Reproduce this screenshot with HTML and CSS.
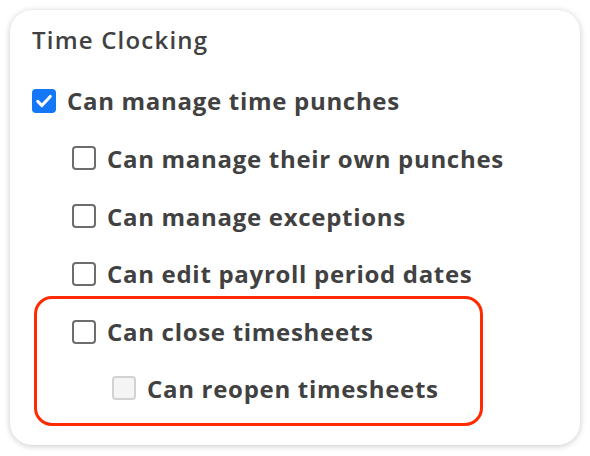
FILE: index.html
```html
<!DOCTYPE html>
<html lang="en">
<head>
<meta charset="UTF-8">
<title>Time Clocking</title>
<link rel="stylesheet" href="styles.css">
</head>
<body>

<div class="card">
  <h2 class="card-title">Time Clocking</h2>

  <label class="perm">
    <span class="box checked">
      <svg viewBox="0 0 24 24" width="20" height="20"><path d="M4.5 12.5l5 5L19.5 6.5" fill="none" stroke="#fff" stroke-width="3.6" stroke-linecap="round" stroke-linejoin="round"/></svg>
    </span>
    Can manage time punches
  </label>

  <label class="perm sub">
    <span class="box"></span>
    Can manage their own punches
  </label>

  <label class="perm sub">
    <span class="box"></span>
    Can manage exceptions
  </label>

  <label class="perm sub">
    <span class="box"></span>
    Can edit payroll period dates
  </label>

  <!-- highlighted group -->
  <div class="highlight">
    <label class="perm">
      <span class="box"></span>
      Can close timesheets
    </label>
    <label class="perm sub disabled">
      <span class="box"></span>
      Can reopen timesheets
    </label>
  </div>
</div>

</body>
</html>
```

FILE: styles.css
```css
body {
  margin: 0;
  padding: 10px;
  background: #fff;
  font-family: "Open Sans", Lato, sans-serif;
  color: #414141;
}

.card {
  width: 570px;
  height: 435px;
  box-sizing: border-box;
  background: #fff;
  border-radius: 22px;
  box-shadow: 0 1px 6px rgba(0,0,0,0.22);
  padding: 15px 22px 0;
}

.card-title {
  margin: 0;
  font-size: 24px;
  font-weight: 600;
  letter-spacing: 1.2px;
  line-height: 30px;
}

.perm {
  display: flex;
  align-items: center;
  gap: 11px;
  height: 30px;
  margin-top: 27.75px;
  font-size: 24px;
  font-weight: 700;
  letter-spacing: 0.7px;
}

.card-title + .perm {
  margin-top: 30.5px;
}

.perm.sub {
  padding-left: 40px;
}

.box {
  width: 24px;
  height: 24px;
  box-sizing: border-box;
  border: 2px solid #6d6d6d;
  border-radius: 4px;
  background: #fff;
  display: flex;
  align-items: center;
  justify-content: center;
  flex-shrink: 0;
}

.box.checked {
  background: #1477f8;
  border-color: #1477f8;
}

.disabled .box {
  background: #f4f4f4;
  border-color: #d2d2d2;
}

/* 赤枠 */
.highlight {
  margin: 7px 75px 0 2px;
  border: 3px solid #ff2a00;
  border-radius: 18px;
  padding: 18px 0 20px 35px;
}

.highlight .perm:first-child {
  margin-top: 0;
}

.highlight .perm + .perm {
  margin-top: 26.5px;
}
```
